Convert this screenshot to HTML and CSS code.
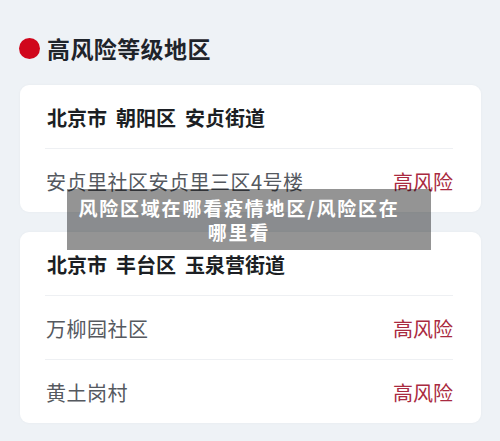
FILE: index.html
```html
<!DOCTYPE html>
<html lang="zh">
<head>
<meta charset="utf-8">
<link rel="stylesheet" href="styles.css">
</head>
<body>
<div class="page">
  <div class="title"><span class="dot"></span><span>高风险等级地区</span></div>
  <div class="card">
    <div class="card-head">北京市 朝阳区 安贞街道</div>
    <div class="row"><span class="place">安贞里社区安贞里三区4号楼</span><span class="risk">高风险</span></div>
  </div>
  <div class="card">
    <div class="card-head">北京市 丰台区 玉泉营街道</div>
    <div class="row"><span class="place">万柳园社区</span><span class="risk">高风险</span></div>
    <div class="row"><span class="place">黄土岗村</span><span class="risk">高风险</span></div>
  </div>
  <div class="caption">风险区域在哪看疫情地区/风险区在<br>哪里看</div>
</div>
</body>
</html>
```

FILE: styles.css
```css
html, body {
  margin: 0;
  padding: 0;
  background: #eef2f6;
}
body {
  font-family: "Noto Sans CJK SC", "Noto Sans", sans-serif;
}
.page {
  position: relative;
  width: 500px;
  height: 441px;
  padding: 0 19px 0 20px;
  box-sizing: border-box;
  overflow: hidden;
}
.title {
  display: flex;
  align-items: center;
  height: 85px;
  padding-top: 10px;
  box-sizing: border-box;
  font-size: 23px;
  font-weight: 700;
  color: #1f242b;
  letter-spacing: 0.4px;
}
.dot {
  width: 21px;
  height: 21px;
  border-radius: 50%;
  background: #d0061c;
  margin-left: -1px;
  margin-right: 7px;
  margin-top: 1px;
}
.card {
  background: #fff;
  border-radius: 9px;
  padding: 0 28px 0 26px;
  margin-bottom: 20px;
  box-shadow: 0 0 3px rgba(0,0,0,0.04);
}
.card-head {
  height: 63px;
  box-sizing: border-box;
  padding-top: 22px;
  line-height: 22px;
  font-size: 20px;
  font-weight: 700;
  color: #1c1f24;
  word-spacing: 4.5px;
  padding-left: 1px;
}
.row {
  height: 64px;
  box-sizing: border-box;
  border-top: 1px solid #eef0f3;
  display: flex;
  align-items: center;
  justify-content: space-between;
  padding: 3px 0 0 1px;
  font-size: 20px;
  line-height: 24px;
  margin-left: -1px;
}
.place {
  color: #55595f;
  letter-spacing: 0.5px;
}
.risk {
  color: #a92a40;
}
.caption {
  position: absolute;
  left: 67px;
  top: 189px;
  width: 364px;
  height: 61px;
  box-sizing: border-box;
  padding: 7px 20px 0 0;
  background: rgba(0,0,0,0.42);
  color: #fff;
  font-size: 19px;
  font-weight: 700;
  line-height: 24px;
  letter-spacing: 1.8px;
  text-align: center;
}
```
